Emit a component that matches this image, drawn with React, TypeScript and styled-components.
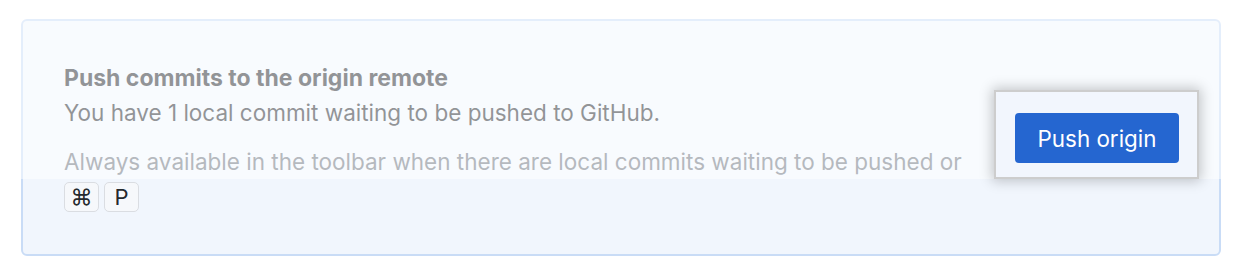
import React from "react";
import styled, { createGlobalStyle } from "styled-components";

const Global = createGlobalStyle`
  html, body { margin: 0; padding: 0; background: #ffffff; }
  body { font-family: Inter, "Noto Sans", sans-serif; -webkit-font-smoothing: antialiased; }
`;

const Page = styled.div`
  width: 1246px;
  height: 276px;
  box-sizing: border-box;
  padding: 19px 25px 0 21px;
  background: #ffffff;
`;

const Card = styled.section`
  position: relative;
  display: flex;
  align-items: center;
  box-sizing: border-box;
  width: 1200px;
  height: 237px;
  padding: 0 20px 0 41px;
  background: #f1f6fd;
  border: 2px solid #c9dcf6;
  border-radius: 6px;
`;

const Fade = styled.div`
  position: absolute;
  left: -3px;
  right: -3px;
  top: -3px;
  height: 161px;
  background: rgba(255, 255, 255, 0.5);
  z-index: 1;
  pointer-events: none;
`;

const Body = styled.div`
  flex: 1;
  align-self: flex-start;
  display: flex;
  flex-direction: column;
  padding-top: 44px;
`;

const Title = styled.h2`
  margin: 0 0 9px;
  font-size: 23px;
  line-height: 26px;
  font-weight: 700;
  color: #24292e;
`;

const Text = styled.p<{ $muted?: boolean; $gap?: number }>`
  margin: 0 0 ${(p) => p.$gap ?? 0}px;
  font-size: 22.5px;
  line-height: 26px;
  font-weight: 400;
  color: ${(p) => (p.$muted ? "#6a737d" : "#24292e")};
`;

const Keys = styled.div`
  display: flex;
  gap: 5px;
`;

const Key = styled.kbd`
  display: inline-flex;
  align-items: center;
  justify-content: center;
  box-sizing: border-box;
  width: 35px;
  height: 30px;
  border: 1.5px solid #dadde2;
  border-radius: 5px;
  background: #f6f8fb;
  font-family: Inter, "Noto Sans", "DejaVu Sans", sans-serif;
  font-size: 22px;
  color: #24292e;
`;

const Popout = styled.div`
  position: relative;
  z-index: 2;
  box-sizing: border-box;
  width: 205px;
  height: 89px;
  margin-top: -6px;
  padding: 21px 0 0 19px;
  background: #f2f6fd;
  border: 2px solid #cdcdcd;
  box-shadow: 0 0 12px 2px rgba(0, 0, 0, 0.22);
`;

const Button = styled.button`
  box-sizing: border-box;
  width: 164px;
  height: 50px;
  border: none;
  border-radius: 4px;
  background: #2566d0;
  color: #ffffff;
  font-family: Inter, "Noto Sans", sans-serif;
  font-size: 22.4px;
  font-weight: 400;
  cursor: pointer;
`;

export default function App() {
  return (
    <>
      <Global />
      <Page>
        <Card>
          <Fade />
          <Body>
            <Title>Push commits to the origin remote</Title>
            <Text $gap={23}>You have 1 local commit waiting to be pushed to GitHub.</Text>
            <Text $muted $gap={7}>
              Always available in the toolbar when there are local commits waiting to be pushed or
            </Text>
            <Keys>
              <Key>⌘</Key>
              <Key>P</Key>
            </Keys>
          </Body>
          <Popout>
            <Button>Push origin</Button>
          </Popout>
        </Card>
      </Page>
    </>
  );
}
